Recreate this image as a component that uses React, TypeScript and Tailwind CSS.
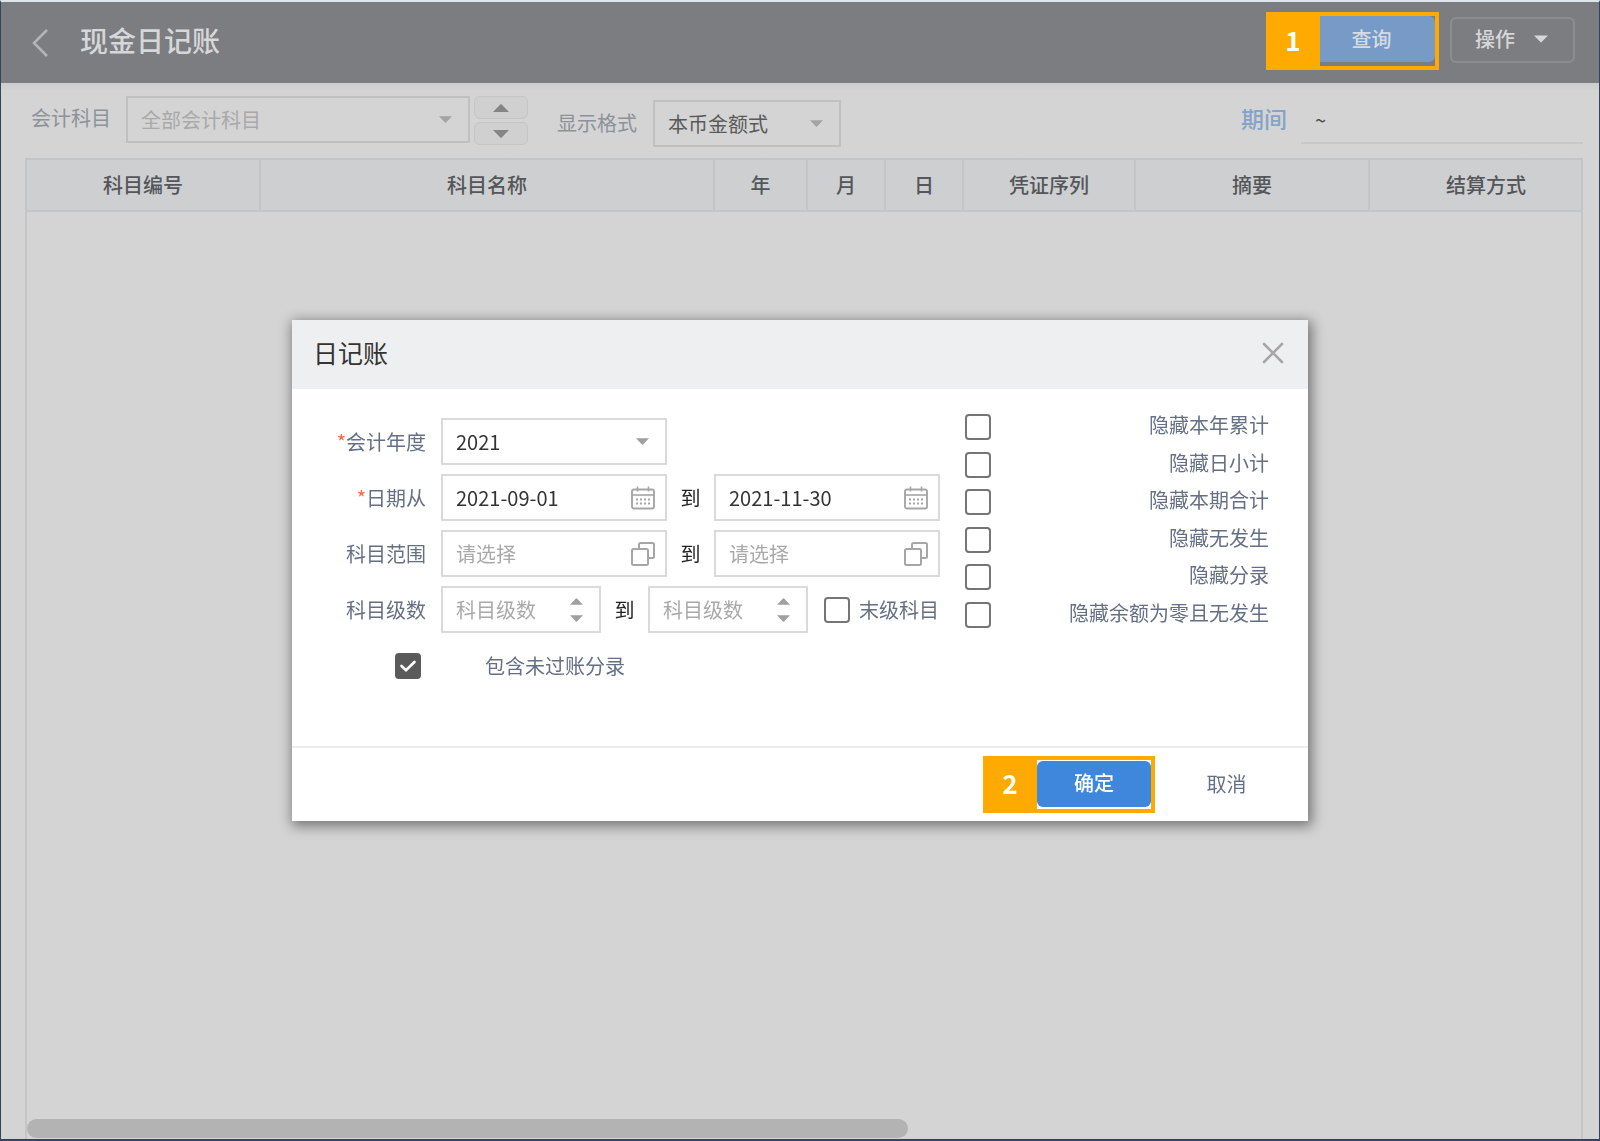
import React, { useState } from "react";

function Caret({ className, up = false }: { className: string; up?: boolean }) {
  return (
    <svg viewBox="0 0 14 7" className={className} aria-hidden="true">
      <path
        d={up ? "M0 7 6.400 .4a.8.8 0 0 1 1.200 0L14 7z" : "M0 0h14L7.600 6.600a.8.8 0 0 1-1.200 0z"}
        fill="currentColor"
      />
    </svg>
  );
}

function CalendarIcon() {
  return (
    <svg viewBox="0 0 24 24" className="pointer-events-none absolute right-3 size-6 text-[#a6a6a6]" fill="none" stroke="currentColor" aria-hidden="true">
      <rect x="1" y="3.5" width="22" height="19" rx="2" strokeWidth="1.9" />
      <path d="M1 9h22" strokeWidth="1.6" />
      <path d="M6.5 0.5v5M17.5 0.5v5" strokeWidth="1.6" />
      <path d="M5 13.5h14M5 17.5h14" strokeWidth="2" strokeDasharray="2 2" />
    </svg>
  );
}

function PickIcon() {
  return (
    <svg viewBox="0 0 24 24" className="pointer-events-none absolute right-3 size-6 text-[#a6a6a6]" fill="none" stroke="currentColor" strokeWidth="2" aria-hidden="true">
      <rect x="1" y="7" width="16" height="16" rx="1.5" />
      <path d="M8 7V2.500A1.500 1.500 0 0 1 9.500 1h12A1.500 1.500 0 0 1 23 2.500v12a1.500 1.500 0 0 1-1.500 1.500H17" />
    </svg>
  );
}

const fieldClass =
  "h-[47px] w-full appearance-none border-2 border-[#dadada] bg-white pl-[13px] text-xl text-[#333] outline-none placeholder:text-[#a9a9a9]";

function DateField({ id, label, initial }: { id: string; label: string; initial: string }) {
  return (
    <div className="relative flex w-[226px] items-center">
      <input id={id} aria-label={label} type="text" defaultValue={initial} className={fieldClass} />
      <CalendarIcon />
    </div>
  );
}

function PickField({ id, label }: { id: string; label: string }) {
  return (
    <div className="relative flex w-[226px] items-center">
      <input id={id} aria-label={label} type="text" placeholder="请选择" className={fieldClass} />
      <PickIcon />
    </div>
  );
}

function LevelField({ id, label }: { id: string; label: string }) {
  return (
    <div className="relative flex w-40 items-center">
      <input id={id} aria-label={label} type="text" inputMode="numeric" placeholder="科目级数" className={fieldClass} />
      <div className="absolute right-[18px] flex flex-col gap-2.5 text-[#a0a0a0]">
        <button type="button" aria-label="增加" className="flex">
          <Caret up className="h-[7px] w-[13px]" />
        </button>
        <button type="button" aria-label="减少" className="flex">
          <Caret className="h-[7px] w-[13px]" />
        </button>
      </div>
    </div>
  );
}

function CheckBox({ id, initial = false }: { id: string; initial?: boolean }) {
  const [checked, setChecked] = useState(initial);
  return (
    <span className="relative flex size-[26px] shrink-0">
      <input
        id={id}
        type="checkbox"
        checked={checked}
        onChange={(e) => setChecked(e.target.checked)}
        className="size-[26px] appearance-none rounded border-2 border-[#757575] bg-white checked:border-[#5a5a5a] checked:bg-[#5a5a5a]"
      />
      {checked && (
        <svg viewBox="0 0 26 26" className="pointer-events-none absolute inset-0" fill="none" stroke="#fff" strokeWidth="2.6" strokeLinecap="round" aria-hidden="true">
          <path d="m6.500 13 4.500 4.300L19.500 9" />
        </svg>
      )}
    </span>
  );
}

function RowLabel({ htmlFor, required = false, children }: { htmlFor: string; required?: boolean; children: React.ReactNode }) {
  return (
    <label htmlFor={htmlFor} className="mr-[15px] w-28 text-right text-[#667085]">
      {required && <span className="text-[#f26a3d]">*</span>}
      {children}
    </label>
  );
}

function To() {
  return <span className="mx-[13px] w-[21px] text-center text-[#222]">到</span>;
}

const columns = [
  { title: "科目编号", width: "w-[233px]" },
  { title: "科目名称", width: "w-[454px]" },
  { title: "年", width: "w-[93px]" },
  { title: "月", width: "w-[78px]" },
  { title: "日", width: "w-[78px]" },
  { title: "凭证序列", width: "w-[172px]" },
  { title: "摘要", width: "w-[234px]" },
  { title: "结算方式", width: "w-[234px]" },
];

const hideOptions = ["隐藏本年累计", "隐藏日小计", "隐藏本期合计", "隐藏无发生", "隐藏分录", "隐藏余额为零且无发生"];

function Header() {
  return (
    <header className="flex h-[81px] items-center bg-[#7b7d80] pr-6 pb-1 pl-[31px] text-[#d6d7d9]">
      <button type="button" aria-label="返回" className="pt-1">
        <svg viewBox="0 0 16 28" className="h-7 w-4 text-[#b2b4b6]" fill="none" stroke="currentColor" strokeWidth="2.6" aria-hidden="true">
          <path d="M15 1 2 14l13 13" />
        </svg>
      </button>
      <h1 className="ml-8 pb-0.5 text-[28px] font-medium">现金日记账</h1>
      <div className="ml-auto flex items-center gap-[11px]">
        <div className="flex bg-[#ffaa00]">
          <span className="flex w-[54px] items-center justify-center pb-0.5 text-[26px] font-bold text-white">1</span>
          <div className="my-1 mr-1 bg-[#7b7d80] pb-1">
            <button type="button" className="h-[46px] w-[115px] rounded-r-md bg-[#789ac6] pr-3 text-xl font-medium text-[#d6dbe2]">
              查询
            </button>
          </div>
        </div>
        <button type="button" className="mb-0.5 flex h-[46px] w-[125px] items-center justify-between rounded-md border-2 border-[#8b8d90] pr-[25px] pb-0.5 pl-[23px] text-xl font-medium">
          操作
          <Caret className="h-2 w-3.5" />
        </button>
      </div>
    </header>
  );
}

function Filters() {
  return (
    <div className="flex h-[75px] items-start bg-linear-to-b from-[#cccccc] to-[#d4d4d4] to-10% pt-[13px] pl-[30px] text-xl text-[#8d9299]">
      <label htmlFor="subject" className="flex h-[47px] items-center pb-1">会计科目</label>
      <div className="relative ml-[15px] flex w-[344px] items-center">
        <select id="subject" className="h-[47px] w-full appearance-none border-2 border-[#c0c0c0] pl-[13px] text-[#a9a9a9]">
          <option>全部会计科目</option>
        </select>
        <Caret className="pointer-events-none absolute right-[18px] h-[7px] w-[13px] text-[#a4a4a4]" />
      </div>
      <div className="ml-1 flex flex-col gap-[3px] text-[#858585]">
        <button type="button" aria-label="上一科目" className="flex h-[23px] w-[54px] items-center justify-center rounded-md border border-[#c5c5c5] bg-[#d0d0d0]">
          <Caret up className="h-2 w-4" />
        </button>
        <button type="button" aria-label="下一科目" className="flex h-[23px] w-[54px] items-center justify-center rounded-md border border-[#c5c5c5] bg-[#d0d0d0]">
          <Caret className="h-2 w-4" />
        </button>
      </div>
      <div className="ml-[29px] flex items-center pt-1">
        <label htmlFor="format" className="pb-0.5">显示格式</label>
        <div className="relative ml-4 flex w-[188px] items-center">
          <select id="format" className="h-[47px] w-full appearance-none border-2 border-[#c0c0c0] pl-[13px] text-[#5a5a5a]">
            <option>本币金额式</option>
          </select>
          <Caret className="pointer-events-none absolute right-[18px] h-[7px] w-[13px] text-[#a4a4a4]" />
        </div>
      </div>
      <label htmlFor="period" className="ml-auto flex h-[47px] items-center pb-0.5 text-[23px] font-medium text-[#86a3c9]">期间</label>
      <input id="period" type="text" defaultValue="~" className="mr-4 ml-3.5 h-12 w-[282px] border-b-2 border-[#c8c8c8] bg-transparent pl-3.5 text-[#4c4c4c] outline-none" />
    </div>
  );
}

function Ledger() {
  return (
    <div className="mr-4 ml-6 flex grow flex-col overflow-hidden border-2 border-b-0 border-[#c3c5c6]">
      <table className="w-[1576px] table-fixed border-collapse">
        <thead>
          <tr className="h-[51px] border-b-2 border-[#c3c5c6] bg-[#cdcfd1]">
            {columns.map((c) => (
              <th key={c.title} scope="col" className={`${c.width} border-r-2 border-[#c3c5c6] pb-px text-xl font-medium text-[#55565a]`}>
                {c.title}
              </th>
            ))}
          </tr>
        </thead>
      </table>
      <div className="mt-auto mb-px h-[19px] w-[56.7%] rounded-full bg-[#b3b3b3]" />
    </div>
  );
}

function JournalDialog() {
  return (
    <div className="fixed inset-0 flex items-center justify-center">
      <form role="dialog" aria-labelledby="dialog-title" onSubmit={(e) => e.preventDefault()} className="flex w-[1016px] flex-col bg-white shadow-[2px_3px_12px_2px_rgba(0,0,0,0.45)]">
        <div className="flex h-[69px] items-center justify-between bg-[#eeeff1] pr-6 pb-1 pl-[21px]">
          <h2 id="dialog-title" className="text-[25px] text-[#333]">日记账</h2>
          <button type="button" aria-label="关闭">
            <svg viewBox="0 0 22 22" className="size-[22px] text-[#a6a6a6]" fill="none" stroke="currentColor" strokeWidth="2.6" strokeLinecap="round" aria-hidden="true">
              <path d="m2 2 18 18M20 2 2 20" />
            </svg>
          </button>
        </div>

        <div className="flex min-h-[357px] justify-between pr-[39px] pl-[22px] text-xl">
          <div className="flex flex-col gap-[9px] pt-[29px]">
            <div className="flex items-center">
              <RowLabel htmlFor="year" required>会计年度</RowLabel>
              <div className="relative flex w-[226px] items-center">
                <select id="year" className={fieldClass}>
                  <option>2021</option>
                </select>
                <Caret className="pointer-events-none absolute right-[18px] h-[7px] w-[13px] text-[#a0a0a0]" />
              </div>
            </div>
            <div className="flex items-center">
              <RowLabel htmlFor="date-from" required>日期从</RowLabel>
              <DateField id="date-from" label="日期从" initial="2021-09-01" />
              <To />
              <DateField id="date-to" label="日期到" initial="2021-11-30" />
            </div>
            <div className="flex items-center">
              <RowLabel htmlFor="range-from">科目范围</RowLabel>
              <PickField id="range-from" label="科目范围从" />
              <To />
              <PickField id="range-to" label="科目范围到" />
            </div>
            <div className="flex items-center">
              <RowLabel htmlFor="level-from">科目级数</RowLabel>
              <LevelField id="level-from" label="科目级数从" />
              <To />
              <LevelField id="level-to" label="科目级数到" />
              <div className="ml-4 flex items-center gap-[9px]">
                <CheckBox id="leaf" />
                <label htmlFor="leaf" className="text-[#667085]">末级科目</label>
              </div>
            </div>
            <div className="flex h-[47px] items-center gap-16 pl-[81px]">
              <CheckBox id="unposted" initial />
              <label htmlFor="unposted" className="text-[#667085]">包含未过账分录</label>
            </div>
          </div>

          <div className="flex h-[239px] w-[304px] flex-col justify-between pt-[25px]">
            {hideOptions.map((text, i) => (
              <div key={text} className="flex h-[26px] items-center justify-between">
                <CheckBox id={`hide-${i}`} />
                <label htmlFor={`hide-${i}`} className="pb-1 text-[#667085]">{text}</label>
              </div>
            ))}
          </div>
        </div>

        <div className="flex h-[75px] items-center justify-end border-t-2 border-[#ececec] pr-[22px] text-xl">
          <div className="flex bg-[#ffaa00]">
            <span className="flex w-[54px] items-center justify-center pb-0.5 text-[26px] font-bold text-white">2</span>
            <div className="my-1 mr-1 bg-white pt-px pb-0.5">
              <button type="submit" className="h-[46px] w-[114px] rounded-md bg-[#3f87dc] pb-0.5 font-medium text-white">确定</button>
            </div>
          </div>
          <button type="button" className="ml-3 h-[47px] w-[119px] pb-0.5 text-[#667085]">取消</button>
        </div>
      </form>
    </div>
  );
}

export default function App() {
  return (
    <div className="flex min-h-screen flex-col border-x border-t-2 border-b-2 border-x-[#34445c] border-t-[#dfe5ea] border-b-[#34445c] bg-[#d4d4d4] font-['Noto_Sans_CJK_SC',sans-serif]">
      <Header />
      <Filters />
      <Ledger />
      <JournalDialog />
    </div>
  );
}
